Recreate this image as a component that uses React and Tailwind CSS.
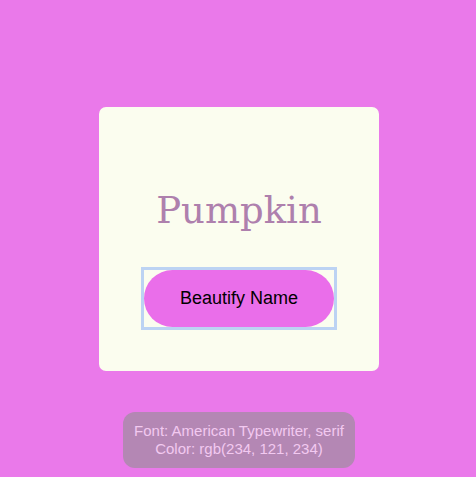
export default function App() {
  return (
    <div className="relative min-h-screen w-full bg-[#ea79ea] flex items-center justify-center" style={{ minHeight: 477 }}>
      <div className="ml-[2px] w-[280px] h-[264px] rounded-[7px] bg-[#fbfdef] flex flex-col items-center pt-[79px]">
        <div className="h-[50px] leading-[50px] text-[37px] text-[#ae80ad] font-['DejaVu_Serif',serif] font-light">
          Pumpkin
        </div>
        <div className="mt-[31px] border-[3px] border-[#bcd3f3]">
          <button className="w-[190px] h-[57px] rounded-full bg-[#ea6eea] text-black text-[18px] font-['Liberation_Sans',Arial,sans-serif] block">
            Beautify Name
          </button>
        </div>
      </div>
      <div className="absolute bottom-[9px] left-1/2 -translate-x-1/2 ml-[1px] w-[232px] h-[56px] rounded-[12px] bg-[#b487b4] flex flex-col items-center justify-center text-[15px] leading-[18px] text-[#f2c9f0] font-['Liberation_Sans',Arial,sans-serif]">
        <div>Font: American Typewriter, serif</div>
        <div>Color: rgb(234, 121, 234)</div>
      </div>
    </div>
  );
}
